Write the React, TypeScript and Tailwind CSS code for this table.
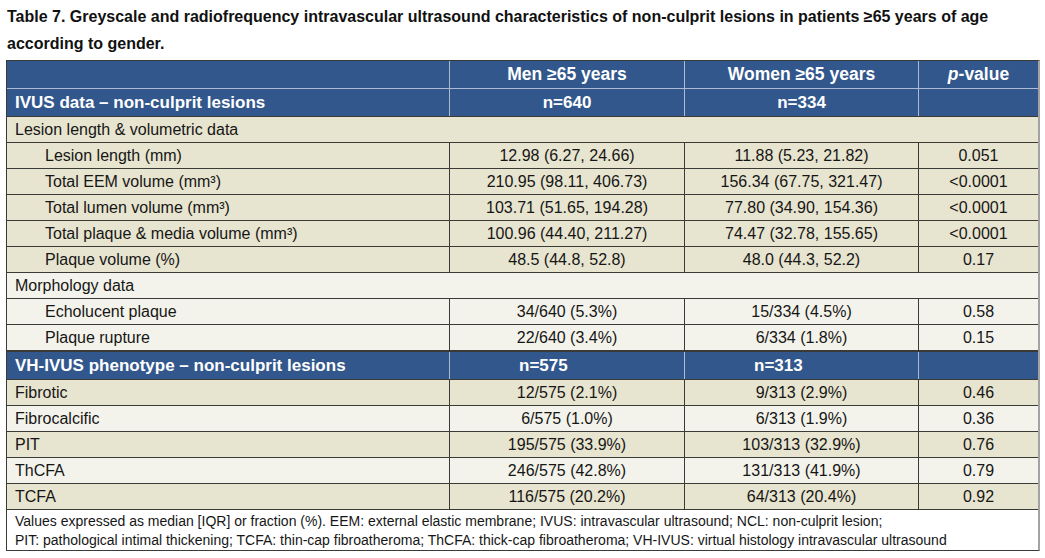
import React from "react";

const BLUE = "bg-[#32578c]";
const GRID = "grid grid-cols-[443px_235px_234px_119px]";

type Row = { label: string; indent?: boolean; a: string; b: string; p: string; light?: boolean };

const sup3 = "\u00B3";

const topRows: Row[] = [
  { label: "Lesion length (mm)", indent: true, a: "12.98 (6.27, 24.66)", b: "11.88 (5.23, 21.82)", p: "0.051" },
  { label: `Total EEM volume (mm${sup3})`, indent: true, a: "210.95 (98.11, 406.73)", b: "156.34 (67.75, 321.47)", p: "<0.0001" },
  { label: `Total lumen volume (mm${sup3})`, indent: true, a: "103.71 (51.65, 194.28)", b: "77.80 (34.90, 154.36)", p: "<0.0001" },
  { label: `Total plaque & media volume (mm${sup3})`, indent: true, a: "100.96 (44.40, 211.27)", b: "74.47 (32.78, 155.65)", p: "<0.0001" },
  { label: "Plaque volume (%)", indent: true, a: "48.5 (44.8, 52.8)", b: "48.0 (44.3, 52.2)", p: "0.17" },
];

const morphRows: Row[] = [
  { label: "Echolucent plaque", indent: true, a: "34/640 (5.3%)", b: "15/334 (4.5%)", p: "0.58", light: true },
  { label: "Plaque rupture", indent: true, a: "22/640 (3.4%)", b: "6/334 (1.8%)", p: "0.15", light: true },
];

const vhRows: Row[] = [
  { label: "Fibrotic", a: "12/575 (2.1%)", b: "9/313 (2.9%)", p: "0.46" },
  { label: "Fibrocalcific", a: "6/575 (1.0%)", b: "6/313 (1.9%)", p: "0.36", light: true },
  { label: "PIT", a: "195/575 (33.9%)", b: "103/313 (32.9%)", p: "0.76" },
  { label: "ThCFA", a: "246/575 (42.8%)", b: "131/313 (41.9%)", p: "0.79", light: true },
  { label: "TCFA", a: "116/575 (20.2%)", b: "64/313 (20.4%)", p: "0.92" },
];

function DataRow({ r }: { r: Row }) {
  const bg = r.light ? "bg-[#f4f3eb]" : "bg-[#e7e4cf]";
  return (
    <div className={`${GRID} h-[26px] border-b border-[#3a3a36] ${bg} text-[16px] text-[#161616]`}>
      <div className={`flex items-center border-r border-[#3a3a36] ${r.indent ? "pl-[38px]" : "pl-[8px]"}`}>{r.label}</div>
      <div className="flex items-center justify-center border-r border-[#3a3a36]">{r.a}</div>
      <div className="flex items-center justify-center border-r border-[#3a3a36]">{r.b}</div>
      <div className="flex items-center justify-center">{r.p}</div>
    </div>
  );
}

function SectionRow({ label, light }: { label: string; light?: boolean }) {
  const bg = light ? "bg-[#f4f3eb]" : "bg-[#e7e4cf]";
  return (
    <div className={`h-[26px] border-b border-[#3a3a36] ${bg} flex items-center pl-[8px] text-[16px] text-[#161616]`}>
      {label}
    </div>
  );
}

export default function App() {
  return (
    <div className="w-[1045px] h-[558px] bg-white font-['Liberation_Sans',Arial,sans-serif] overflow-hidden">
      <div className="pl-[7px] pt-[3px] text-[16px] leading-[27px] text-[#111] font-bold">
        <div className="whitespace-nowrap">
          Table 7. Greyscale and radiofrequency intravascular ultrasound characteristics of non-culprit lesions in patients ≥65 years of age
        </div>
        <div className="whitespace-nowrap">according to gender.</div>
      </div>
      <div className="ml-[6px] mt-[3px] w-[1034px] border-l border-t border-b border-[#3a3a36] border-r-2 border-r-[#a3a3a3]">
        <div className={`${GRID} h-[28px] border-b border-[#aebbd0] ${BLUE} text-white text-[17.5px] font-bold`}>
          <div className="border-r border-[#aebbd0]" />
          <div className="flex items-center justify-center border-r border-[#aebbd0]">Men ≥65 years</div>
          <div className="flex items-center justify-center border-r border-[#aebbd0]">Women ≥65 years</div>
          <div className="flex items-center justify-center">
            <span className="italic">p</span>-value
          </div>
        </div>
        <div className={`${GRID} h-[28px] border-b border-[#3a3a36] ${BLUE} text-white text-[17px] font-bold`}>
          <div className="flex items-center pl-[8px] border-r border-[#aebbd0]">IVUS data – non-culprit lesions</div>
          <div className="flex items-center justify-center border-r border-[#aebbd0]">n=640</div>
          <div className="flex items-center justify-center border-r border-[#aebbd0]">n=334</div>
          <div />
        </div>
        <SectionRow label="Lesion length & volumetric data" />
        {topRows.map((r) => (
          <DataRow key={r.label} r={r} />
        ))}
        <SectionRow label="Morphology data" light />
        {morphRows.map((r) => (
          <DataRow key={r.label} r={r} />
        ))}
        <div className={`${GRID} h-[29px] border-t border-b border-[#3a3a36] ${BLUE} text-white text-[17px] font-bold`}>
          <div className="flex items-center pl-[8px] border-r border-[#aebbd0]">VH-IVUS phenotype – non-culprit lesions</div>
          <div className="flex items-center pl-[69px] border-r border-[#aebbd0]">n=575</div>
          <div className="flex items-center pl-[69px] border-r border-[#aebbd0]">n=313</div>
          <div />
        </div>
        {vhRows.map((r) => (
          <DataRow key={r.label} r={r} />
        ))}
        <div className="h-[40px] bg-white pl-[8px] pt-[2px] text-[14px] leading-[19px] text-[#161616]">
          <div className="whitespace-nowrap">
            Values expressed as median [IQR] or fraction (%). EEM: external elastic membrane; IVUS: intravascular ultrasound; NCL: non-culprit lesion;
          </div>
          <div className="whitespace-nowrap">
            PIT: pathological intimal thickening; TCFA: thin-cap fibroatheroma; ThCFA: thick-cap fibroatheroma; VH-IVUS: virtual histology intravascular ultrasound
          </div>
        </div>
      </div>
    </div>
  );
}
